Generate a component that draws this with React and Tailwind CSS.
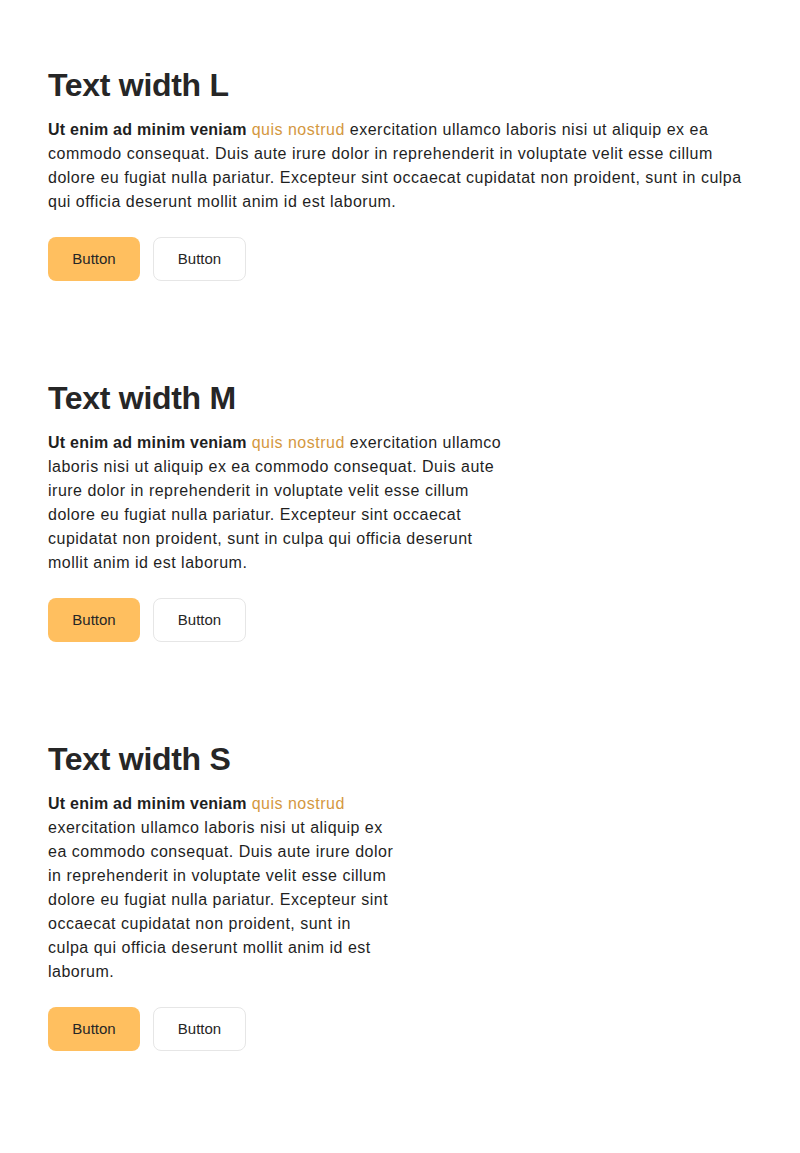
const text = 'exercitation ullamco laboris nisi ut aliquip ex ea commodo consequat. Duis aute irure dolor in reprehenderit in voluptate velit esse cillum dolore eu fugiat nulla pariatur. Excepteur sint occaecat cupidatat non proident, sunt in culpa qui officia deserunt mollit anim id est laborum.'

const sections = [
  { title: 'Text width L', width: 'max-w-[704px]' },
  { title: 'Text width M', width: 'max-w-[460px]' },
  { title: 'Text width S', width: 'max-w-[346px]' },
]

function Section({ title, width }) {
  return (
    <section className="pt-12 pb-[49px]">
      <h2 className="text-[32px] leading-[40px] font-bold text-[#262626] tracking-[-0.3px]">{title}</h2>
      <p className={`mt-[13px] text-base leading-6 text-[#1f1f1f] tracking-[0.5px] ${width}`}>
        <strong className="font-bold tracking-[0.25px]">Ut enim ad minim veniam</strong>{' '}
        <a className="text-[#d4983f]">quis nostrud</a> {text}
      </p>
      <div className="mt-[23px] flex gap-[13px]">
        <button className="w-[92px] h-[44px] rounded-lg bg-[#ffbf5f] text-[15px] text-[#262626]">
          Button
        </button>
        <button className="w-[93px] h-[44px] rounded-lg bg-white border border-[#e6e6e6] text-[15px] text-[#262626]">
          Button
        </button>
      </div>
    </section>
  )
}

export default function App() {
  return (
    <div className="min-h-screen bg-white px-12 pt-[17px]" style={{ fontFamily: '"Liberation Sans", Arial, sans-serif' }}>
      {sections.map((s) => (
        <Section key={s.title} {...s} />
      ))}
    </div>
  )
}
